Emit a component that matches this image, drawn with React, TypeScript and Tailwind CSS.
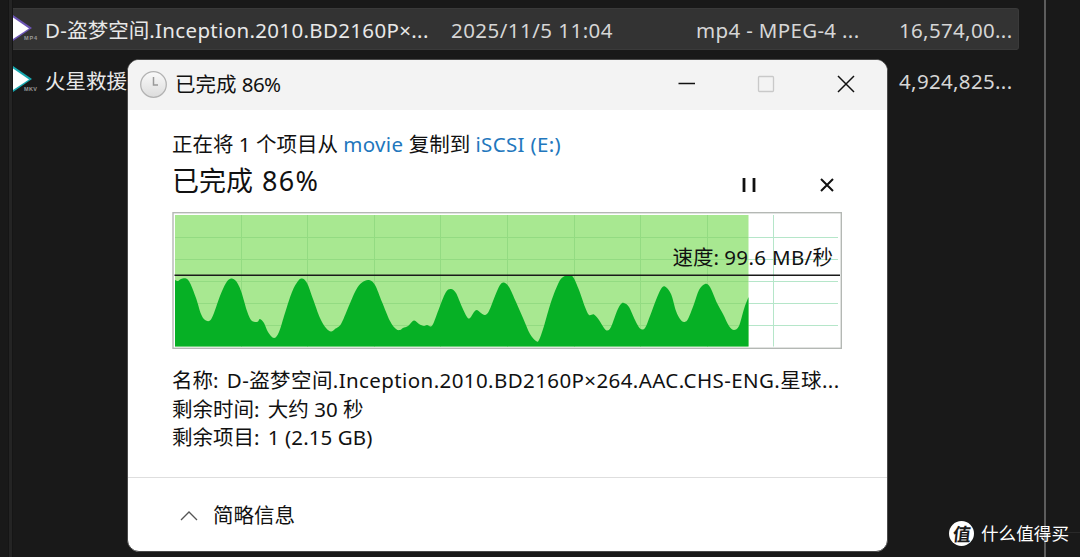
import type { ReactNode } from "react";

const speedSamples: [number, number][] = [
  [175, 280], [178, 281], [181, 279], [186, 278.5], [190, 283], [196, 298], [201, 314], [205, 320], [210, 320.5],
  [214, 313], [220, 296], [226, 283], [231, 278.5], [236, 281], [241, 291], [247, 311], [251, 320], [255, 322],
  [258, 321.5], [260, 319], [264, 323], [268, 332], [274, 338], [279, 332], [285, 313], [292, 292], [298, 281],
  [302, 278.5], [307, 283], [313, 299], [320, 318], [326, 328], [331, 331.5], [335, 329], [341, 324], [348, 308],
  [356, 290], [362, 282.5], [369, 280], [375, 285], [382, 302], [390, 321], [396, 329], [400, 330], [403, 328],
  [408, 326], [414, 320.5], [419, 324], [424, 326], [427, 325], [431, 326.5], [434, 322], [440, 306], [446, 292],
  [451, 289], [456, 293], [462, 307], [467, 317], [470, 318], [474, 312], [477, 310], [481, 313], [485, 315],
  [489, 311], [495, 296], [500, 285], [504, 282.5], [509, 287], [516, 302], [523, 318], [530, 334], [536, 341],
  [539, 340], [544, 326], [551, 302], [559, 282], [564, 276.5], [568, 275.5], [573, 277], [579, 290], [585, 307],
  [589, 315], [594, 314.5], [599, 320], [604, 328], [607, 330.5], [611, 327], [617, 311], [621, 304], [624, 303],
  [629, 307], [635, 320], [640, 328.5], [645, 328], [650, 316], [656, 300], [661, 289], [665, 286.5], [671, 294],
  [676, 311], [680, 319], [684, 322], [688, 319], [694, 304], [699, 290], [705, 284], [710, 287], [717, 303],
  [723, 314], [729, 326], [734, 330], [739, 326], [744, 309], [748.5, 297],
];

// smooth curve through every sample
const curve = speedSamples.slice(1).map((p, i) => {
  const p0 = speedSamples[Math.max(0, i - 1)];
  const p1 = speedSamples[i];
  const p3 = speedSamples[Math.min(speedSamples.length - 1, i + 2)];
  const c1 = [p1[0] + (p[0] - p0[0]) / 6, p1[1] + (p[1] - p0[1]) / 6];
  const c2 = [p[0] - (p3[0] - p1[0]) / 6, p[1] - (p3[1] - p1[1]) / 6];
  return `C${c1.join(" ")} ${c2.join(" ")} ${p.join(" ")}`;
});
const areaPath = `M175 346.5L175 280${curve.join("")}L748.5 346.5Z`;

const columns = [241.5, 307.5, 374.5, 440.5, 507.5, 574.5, 640.5, 707.5, 773.5];
const rows = [237.5, 259.5, 281.5, 303.5, 325.5];

// Latin runs are set a little wider than the Chinese ones
const En = ({ children }: { children: ReactNode }) => <span className="tracking-[0.33px]">{children}</span>;

const VideoIcon = ({ color, label }: { color: string; label: string }) => (
  <svg width="26" height="32" viewBox="0 0 26 32" className="shrink-0">
    <path d="M0 2 L19 15 L0 28Z" fill={color} />
    <path d="M0 4.5 L16 15.5 L0 26Z" fill="#fff" />
    <text x="11" y="27" fontSize="5.5" fontWeight="700" fill="#9a9a9a" fontFamily="Liberation Sans" textLength="13">
      {label}
    </text>
  </svg>
);

const FileList = () => (
  <div className="flex h-[557px] w-[1080px]">
    <div className="ml-[8px] w-[5px] shrink-0 border-x border-[#151515] bg-[#242424]" />
    <div className="w-[1031px] shrink-0 pt-[8px] text-[20.5px] leading-[36px] text-[#d6d6d6]">
      <div className="flex h-[42px] w-[1006px] items-center rounded-r-[3px] border border-l-0 border-[#3a3a3a] bg-[#333]">
        <VideoIcon color="#6b54b4" label="MP4" />
        <div className="ml-[6px] w-[406px] whitespace-nowrap pt-px text-[#e8e8e8]">
          <En>D-</En>盗梦空间<En>.Inception.2010.BD2160P×...</En>
        </div>
        <div className="w-[245px] whitespace-nowrap pt-px tracking-[0.46px]">2025/11/5 11:04</div>
        <div className="w-[203px] whitespace-nowrap pt-px"><En>mp4 - MPEG-4 ...</En></div>
        <div className="whitespace-nowrap pt-px"><En>16,574,00...</En></div>
      </div>
      <div className="mt-[9px] flex h-[42px] items-center">
        <VideoIcon color="#17a9b0" label="MKV" />
        <div className="ml-[6px] w-[854px] whitespace-nowrap pt-px text-[#e8e8e8]">火星救援</div>
        <div className="whitespace-nowrap pt-px"><En>4,924,825...</En></div>
      </div>
    </div>
    <div className="w-[2px] shrink-0 bg-[#5c5c5c]" />
    <div className="mt-[532px] h-px grow bg-[#292929]" />
  </div>
);

const TitleBar = () => (
  <div className="flex h-[50px] items-center bg-[#f3f3f3] pb-[2px] pl-[10px]">
    <svg width="30" height="30" viewBox="0 0 30 30">
      <defs>
        <linearGradient id="face" x1="0" y1="0" x2="0" y2="1">
          <stop offset="0" stopColor="#fafafa" />
          <stop offset="1" stopColor="#dcdcdc" />
        </linearGradient>
      </defs>
      <circle cx="15.5" cy="15.5" r="12.8" fill="url(#face)" stroke="#b3b3b3" strokeWidth="1.3" />
      <path d="M15.5 8V16H20" fill="none" stroke="#999" strokeWidth="1.5" />
    </svg>
    <span className="ml-[7px] text-[20.5px] leading-none">已完成 <span className="tracking-[-0.6px]">86%</span></span>
    <div className="ml-auto flex items-center pr-[32px]">
      <svg width="18" height="20" viewBox="0 0 18 20" className="mr-[61px]">
        <path d="M0.5 9.5H17" stroke="#111" strokeWidth="1.4" />
      </svg>
      <svg width="18" height="18" viewBox="0 0 18 18" className="mr-[62px]">
        <rect x="1.5" y="1.5" width="15" height="15" rx="1" fill="none" stroke="#c9c9c9" strokeWidth="1.3" />
      </svg>
      <svg width="18" height="18" viewBox="0 0 18 18">
        <path d="M1 1L17 17M17 1L1 17" stroke="#111" strokeWidth="1.5" />
      </svg>
    </div>
  </div>
);

const SpeedChart = () => (
  <div className="relative h-[137px] w-[670px]">
    <svg width="670" height="137" viewBox="172 212 670 137" fill="none" className="block">
      <rect x="173" y="212.7" width="668.3" height="135.6" fill="#fff" stroke="#b4b8b4" strokeWidth="1.4" />
      <path d={columns.map((x) => `M${x} 215V346.5`).join("")} stroke="#b5e6c9" strokeWidth="1" />
      <path d={rows.map((y) => `M175 ${y}H838`).join("")} stroke="#b5e6c9" strokeWidth="1" />
      <rect x="175" y="215" width="573.5" height="131.5" fill="#a8e891" />
      <path d={columns.slice(0, 8).map((x) => `M${x} 215V346.5`).join("")} stroke="#93db82" strokeWidth="1" />
      <path d={rows.map((y) => `M175 ${y}H748`).join("")} stroke="#93db82" strokeWidth="1" />
      <path d={areaPath} fill="#06b025" />
      <path d="M174.5 275.2H840" stroke="#1a1a1a" strokeWidth="1.5" />
    </svg>
    <div className="absolute right-[9px] top-[32px] whitespace-nowrap text-[20.5px] leading-[26px]">
      速度: <En>99.6 MB/</En>秒
    </div>
  </div>
);

const CopyDialog = () => (
  <div className="absolute left-[127px] top-[59px] flex h-[493px] w-[761px] flex-col overflow-hidden rounded-[12px] border border-[#4a4a4a] bg-white text-[#111]">
    <TitleBar />
    <div className="flex flex-col pl-[44px] pr-[45px]">
      <p className="mt-[20px] whitespace-nowrap text-[20.5px] leading-[28px]">
        正在将 1 个项目从 <span className="text-[#2277bd]"><En>movie</En></span> 复制到{" "}
        <span className="text-[#2277bd]"><En>iSCSI (E:)</En></span>
      </p>
      <div className="mt-px flex h-[43px] items-center">
        <h1 className="text-[27px] leading-[41px]">已完成 <span className="ml-[2px] tracking-[1.3px]">86%</span></h1>
        <svg width="14" height="14" viewBox="0 0 14 14" className="ml-auto mt-[8px]">
          <path d="M2 0V14M12 0V14" stroke="#111" strokeWidth="2.8" />
        </svg>
        <svg width="14" height="14" viewBox="0 0 14 14" className="ml-[64px] mr-[8px] mt-[8px]">
          <path d="M1 1L13 13M13 1L1 13" stroke="#111" strokeWidth="2" />
        </svg>
      </div>
      <div className="mt-[10px]">
        <SpeedChart />
      </div>
      <div className="mt-[17px] whitespace-nowrap text-[20.5px] leading-[28.7px]">
        <p>
          <span className="mr-[3px]">名称: </span>
          <span className="tracking-[0.4px]">D-盗梦空间.Inception.2010.BD2160P×264.AAC.CHS-ENG.星球...</span>
        </p>
        <p><span className="mr-[3px]">剩余时间: </span>大约 30 秒</p>
        <p><span className="mr-[3px]">剩余项目: </span><span className="tracking-[0.1px]">1 (2.15 GB)</span></p>
      </div>
    </div>
    <div className="mt-auto flex h-[74px] items-center border-t border-[#dedede] pl-[52px] pt-[2px]">
      <svg width="18" height="12" viewBox="0 0 18 12">
        <path d="M1 10L9 2L17 10" fill="none" stroke="#555" strokeWidth="1.3" />
      </svg>
      <span className="ml-[15px] text-[20.5px] leading-none">简略信息</span>
    </div>
  </div>
);

const Watermark = () => (
  <div className="absolute left-[949px] top-[521px] flex items-center text-white">
    <span className="flex h-[25px] w-[25px] items-center justify-center rounded-full bg-white text-[18px] font-bold leading-none text-[#1a1a1a]">
      <span className="-skew-x-6">值</span>
    </span>
    <span className="ml-[7px] whitespace-nowrap text-[17.6px] leading-[25px]">什么值得买</span>
  </div>
);

export default function App() {
  return (
    <main className="relative h-[557px] w-[1080px] overflow-hidden bg-[#191919] font-['Noto_Sans','Noto_Sans_CJK_SC',sans-serif]">
      <FileList />
      <CopyDialog />
      <Watermark />
    </main>
  );
}
